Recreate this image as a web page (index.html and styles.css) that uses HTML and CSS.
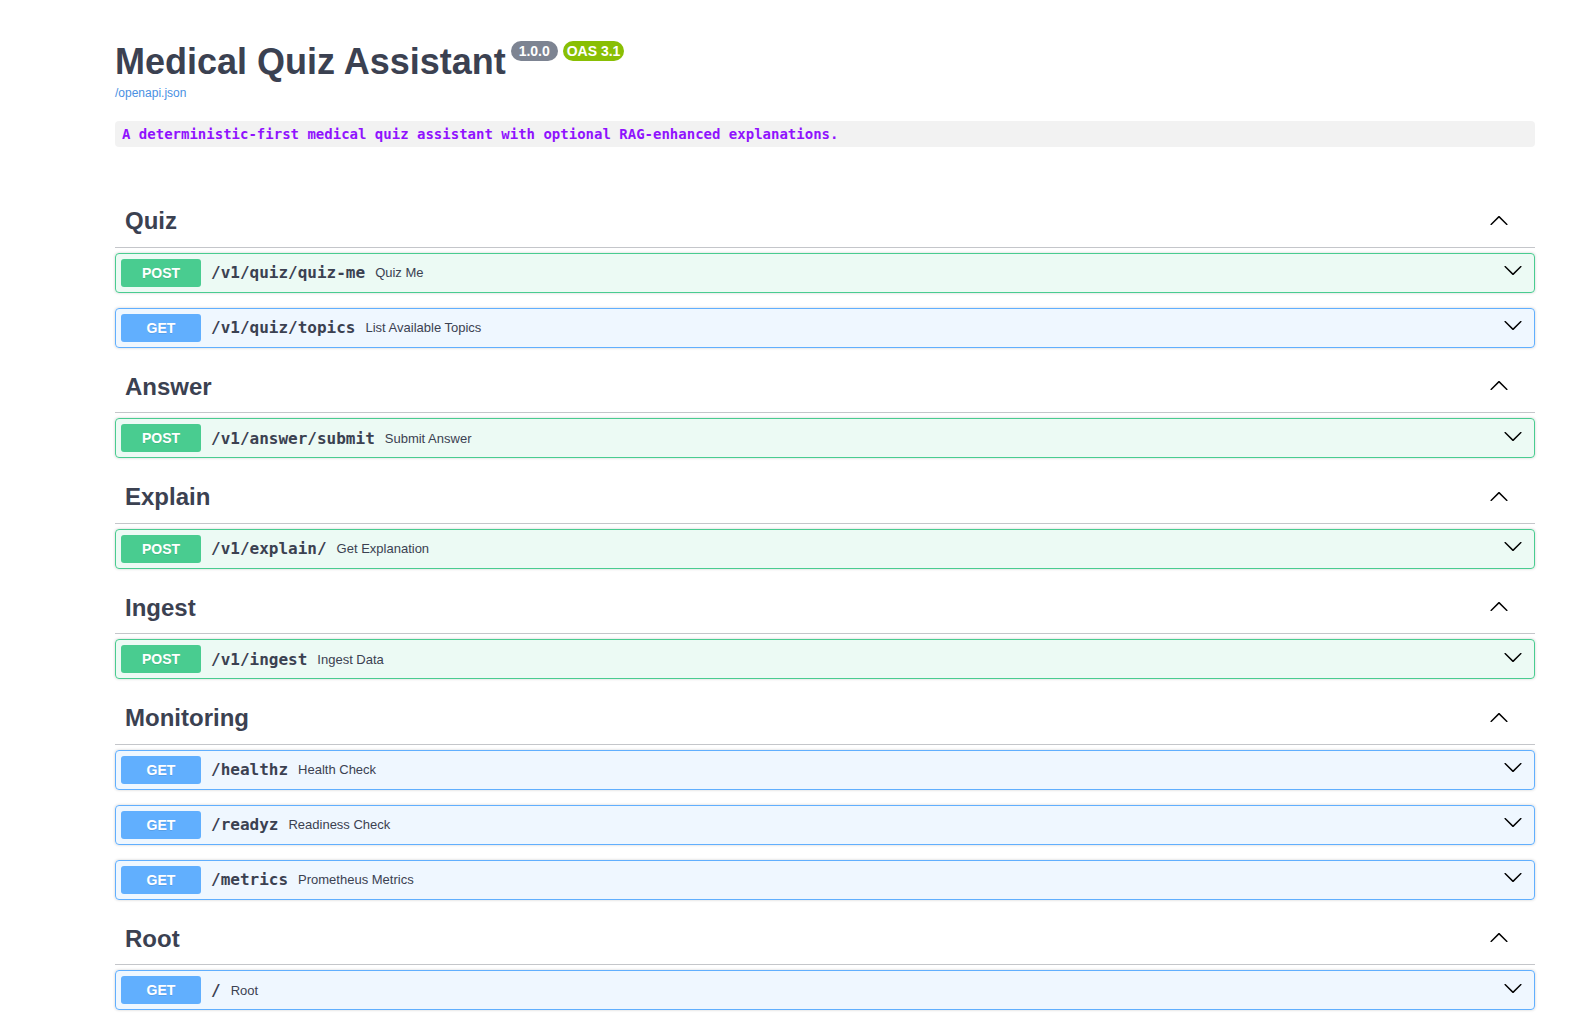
FILE: index.html
```html
<!DOCTYPE html>
<html lang="en">
<head>
<meta charset="utf-8">
<title>Medical Quiz Assistant</title>
<link rel="stylesheet" href="styles.css">
</head>
<body>
<div class="page">
  <section class="info">
    <h2 class="title">Medical Quiz Assistant<span class="stamp"><span class="stamp-text"> 1.0.0 </span></span><span class="stamp oas"><span class="stamp-text">OAS 3.1</span></span></h2>
    <div class="base-url"><a class="link" href="#">/openapi.json</a></div>
    <div class="description"><code>A deterministic-first medical quiz assistant with optional RAG-enhanced explanations.</code></div>
  </section>

  <section class="tag-section">
    <h3 class="tag"><span class="tag-name">Quiz</span><span class="tag-fill"></span><button class="tag-toggle" type="button"><svg width="20" height="20" viewBox="0 0 20 20"><path d="M17.418 14.908c.272.268.709.268.979 0s.271-.701 0-.969l-7.908-7.830c-.27-.268-.707-.268-.979 0l-7.908 7.830c-.27.268-.27.701 0 .969.271.268.709.268.979 0L10 7.767l7.418 7.141z"/></svg></button></h3>
    <div class="op post"><span class="method">POST</span><span class="path">/v1/quiz/quiz-me</span><span class="summary">Quiz Me</span><span class="op-fill"></span><button class="op-toggle" type="button"><svg width="20" height="20" viewBox="0 0 20 20"><path d="M17.418 6.109c.272-.268.709-.268.979 0s.271.701 0 .969l-7.908 7.83c-.27.268-.707.268-.979 0l-7.908-7.83c-.27-.268-.27-.701 0-.969.271-.268.709-.268.979 0L10 13.25l7.418-7.141z"/></svg></button></div>
    <div class="op get"><span class="method">GET</span><span class="path">/v1/quiz/topics</span><span class="summary">List Available Topics</span><span class="op-fill"></span><button class="op-toggle" type="button"><svg width="20" height="20" viewBox="0 0 20 20"><path d="M17.418 6.109c.272-.268.709-.268.979 0s.271.701 0 .969l-7.908 7.83c-.27.268-.707.268-.979 0l-7.908-7.83c-.27-.268-.27-.701 0-.969.271-.268.709-.268.979 0L10 13.25l7.418-7.141z"/></svg></button></div>
  </section>

  <section class="tag-section">
    <h3 class="tag"><span class="tag-name">Answer</span><span class="tag-fill"></span><button class="tag-toggle" type="button"><svg width="20" height="20" viewBox="0 0 20 20"><path d="M17.418 14.908c.272.268.709.268.979 0s.271-.701 0-.969l-7.908-7.830c-.27-.268-.707-.268-.979 0l-7.908 7.830c-.27.268-.27.701 0 .969.271.268.709.268.979 0L10 7.767l7.418 7.141z"/></svg></button></h3>
    <div class="op post"><span class="method">POST</span><span class="path">/v1/answer/submit</span><span class="summary">Submit Answer</span><span class="op-fill"></span><button class="op-toggle" type="button"><svg width="20" height="20" viewBox="0 0 20 20"><path d="M17.418 6.109c.272-.268.709-.268.979 0s.271.701 0 .969l-7.908 7.83c-.27.268-.707.268-.979 0l-7.908-7.83c-.27-.268-.27-.701 0-.969.271-.268.709-.268.979 0L10 13.25l7.418-7.141z"/></svg></button></div>
  </section>

  <section class="tag-section">
    <h3 class="tag"><span class="tag-name">Explain</span><span class="tag-fill"></span><button class="tag-toggle" type="button"><svg width="20" height="20" viewBox="0 0 20 20"><path d="M17.418 14.908c.272.268.709.268.979 0s.271-.701 0-.969l-7.908-7.830c-.27-.268-.707-.268-.979 0l-7.908 7.830c-.27.268-.27.701 0 .969.271.268.709.268.979 0L10 7.767l7.418 7.141z"/></svg></button></h3>
    <div class="op post"><span class="method">POST</span><span class="path">/v1/explain/</span><span class="summary">Get Explanation</span><span class="op-fill"></span><button class="op-toggle" type="button"><svg width="20" height="20" viewBox="0 0 20 20"><path d="M17.418 6.109c.272-.268.709-.268.979 0s.271.701 0 .969l-7.908 7.83c-.27.268-.707.268-.979 0l-7.908-7.83c-.27-.268-.27-.701 0-.969.271-.268.709-.268.979 0L10 13.25l7.418-7.141z"/></svg></button></div>
  </section>

  <section class="tag-section">
    <h3 class="tag"><span class="tag-name">Ingest</span><span class="tag-fill"></span><button class="tag-toggle" type="button"><svg width="20" height="20" viewBox="0 0 20 20"><path d="M17.418 14.908c.272.268.709.268.979 0s.271-.701 0-.969l-7.908-7.830c-.27-.268-.707-.268-.979 0l-7.908 7.830c-.27.268-.27.701 0 .969.271.268.709.268.979 0L10 7.767l7.418 7.141z"/></svg></button></h3>
    <div class="op post"><span class="method">POST</span><span class="path">/v1/ingest</span><span class="summary">Ingest Data</span><span class="op-fill"></span><button class="op-toggle" type="button"><svg width="20" height="20" viewBox="0 0 20 20"><path d="M17.418 6.109c.272-.268.709-.268.979 0s.271.701 0 .969l-7.908 7.83c-.27.268-.707.268-.979 0l-7.908-7.83c-.27-.268-.27-.701 0-.969.271-.268.709-.268.979 0L10 13.25l7.418-7.141z"/></svg></button></div>
  </section>

  <section class="tag-section">
    <h3 class="tag"><span class="tag-name">Monitoring</span><span class="tag-fill"></span><button class="tag-toggle" type="button"><svg width="20" height="20" viewBox="0 0 20 20"><path d="M17.418 14.908c.272.268.709.268.979 0s.271-.701 0-.969l-7.908-7.830c-.27-.268-.707-.268-.979 0l-7.908 7.830c-.27.268-.27.701 0 .969.271.268.709.268.979 0L10 7.767l7.418 7.141z"/></svg></button></h3>
    <div class="op get"><span class="method">GET</span><span class="path">/healthz</span><span class="summary">Health Check</span><span class="op-fill"></span><button class="op-toggle" type="button"><svg width="20" height="20" viewBox="0 0 20 20"><path d="M17.418 6.109c.272-.268.709-.268.979 0s.271.701 0 .969l-7.908 7.83c-.27.268-.707.268-.979 0l-7.908-7.83c-.27-.268-.27-.701 0-.969.271-.268.709-.268.979 0L10 13.25l7.418-7.141z"/></svg></button></div>
    <div class="op get"><span class="method">GET</span><span class="path">/readyz</span><span class="summary">Readiness Check</span><span class="op-fill"></span><button class="op-toggle" type="button"><svg width="20" height="20" viewBox="0 0 20 20"><path d="M17.418 6.109c.272-.268.709-.268.979 0s.271.701 0 .969l-7.908 7.83c-.27.268-.707.268-.979 0l-7.908-7.83c-.27-.268-.27-.701 0-.969.271-.268.709-.268.979 0L10 13.25l7.418-7.141z"/></svg></button></div>
    <div class="op get"><span class="method">GET</span><span class="path">/metrics</span><span class="summary">Prometheus Metrics</span><span class="op-fill"></span><button class="op-toggle" type="button"><svg width="20" height="20" viewBox="0 0 20 20"><path d="M17.418 6.109c.272-.268.709-.268.979 0s.271.701 0 .969l-7.908 7.83c-.27.268-.707.268-.979 0l-7.908-7.83c-.27-.268-.27-.701 0-.969.271-.268.709-.268.979 0L10 13.25l7.418-7.141z"/></svg></button></div>
  </section>

  <section class="tag-section">
    <h3 class="tag"><span class="tag-name">Root</span><span class="tag-fill"></span><button class="tag-toggle" type="button"><svg width="20" height="20" viewBox="0 0 20 20"><path d="M17.418 14.908c.272.268.709.268.979 0s.271-.701 0-.969l-7.908-7.830c-.27-.268-.707-.268-.979 0l-7.908 7.830c-.27.268-.27.701 0 .969.271.268.709.268.979 0L10 7.767l7.418 7.141z"/></svg></button></h3>
    <div class="op get"><span class="method">GET</span><span class="path">/</span><span class="summary">Root</span><span class="op-fill"></span><button class="op-toggle" type="button"><svg width="20" height="20" viewBox="0 0 20 20"><path d="M17.418 6.109c.272-.268.709-.268.979 0s.271.701 0 .969l-7.908 7.83c-.27.268-.707.268-.979 0l-7.908-7.830c-.27-.268-.27-.701 0-.969.271-.268.709-.268.979 0L10 13.25l7.418-7.141z"/></svg></button></div>
  </section>
</div>
</body>
</html>
```

FILE: styles.css
```css
html, body {
  margin: 0;
  padding: 0;
  background: #fff;
}

body {
  font-family: "Liberation Sans", Arial, sans-serif;
  color: #3b4151;
}

.page {
  width: 1420px;
  margin-left: 115px;
  padding-bottom: 40px;
}

.info {
  padding-top: 41px;
  margin-bottom: 50px;
}

.title {
  margin: 0;
  font-size: 36px;
  line-height: 41px;
  font-weight: 700;
  color: #3b4151;
  white-space: nowrap;
}

.stamp {
  display: inline-block;
  vertical-align: top;
  margin: 0 0 0 5px;
  padding: 2px 4px;
  border-radius: 57px;
  background: #7d8492;
  line-height: 16px;
}

.stamp.oas {
  background: #89bf04;
}

.stamp-text {
  display: block;
  white-space: pre;
  color: #fff;
  font-size: 14px;
  font-weight: 700;
  font-family: "Liberation Sans", Arial, sans-serif;
}

.base-url {
  margin-top: 4px;
  font-size: 12px;
  line-height: 14px;
}

.link {
  color: #4990e2;
  text-decoration: none;
}

.description {
  margin-top: 21px;
  padding: 5px 7px;
  border-radius: 4px;
  background: rgba(0, 0, 0, 0.05);
  line-height: 16px;
}

.description code {
  font-family: "DejaVu Sans Mono", monospace;
  font-size: 14px;
  font-weight: 700;
  color: #9012fe;
}

.tag-section {
  display: flex;
  flex-direction: column;
}

.tag {
  display: flex;
  align-items: flex-start;
  height: 29.5px;
  margin: 0 0 5px;
  padding: 10px 20px 10px 10px;
  border-bottom: 1px solid rgba(59, 65, 81, 0.3);
  font-size: 24px;
  font-weight: 700;
  color: #3b4151;
}

.tag-name {
  line-height: normal;
}

.tag-fill,
.op-fill {
  flex: 1;
}

.tag-toggle,
.op-toggle {
  display: flex;
  align-self: flex-start;
  border: none;
  background: none;
  margin: 0;
  padding: 0 6px;
  cursor: pointer;
}

.tag-toggle {
  padding-top: 2.5px;
}

.tag-toggle svg,
.op-toggle svg {
  display: block;
  fill: #000;
}

.op {
  display: flex;
  align-items: center;
  margin: 0 0 15px;
  padding: 5px;
  border: 1px solid #000;
  border-radius: 4px;
  box-shadow: 0 0 3px rgba(0, 0, 0, 0.19);
}

.op.post {
  background: rgba(73, 204, 144, 0.1);
  border-color: #49cc90;
}

.op.get {
  background: rgba(97, 175, 254, 0.1);
  border-color: #61affe;
}

.method {
  min-width: 80px;
  padding: 6px 0;
  border-radius: 3px;
  font-size: 14px;
  line-height: 16px;
  font-weight: 700;
  text-align: center;
  color: #fff;
  text-shadow: 0 1px 0 rgba(0, 0, 0, 0.1);
}

.op.post .method {
  background: #49cc90;
}

.op.get .method {
  background: #61affe;
}

.path {
  padding: 0 10px;
  font-family: "DejaVu Sans Mono", monospace;
  font-size: 16px;
  font-weight: 700;
  color: #3b4151;
}

.summary {
  font-size: 13px;
  color: #3b4151;
}

.op-toggle {
  align-self: flex-start;
  padding-top: 1.5px;
}
```
